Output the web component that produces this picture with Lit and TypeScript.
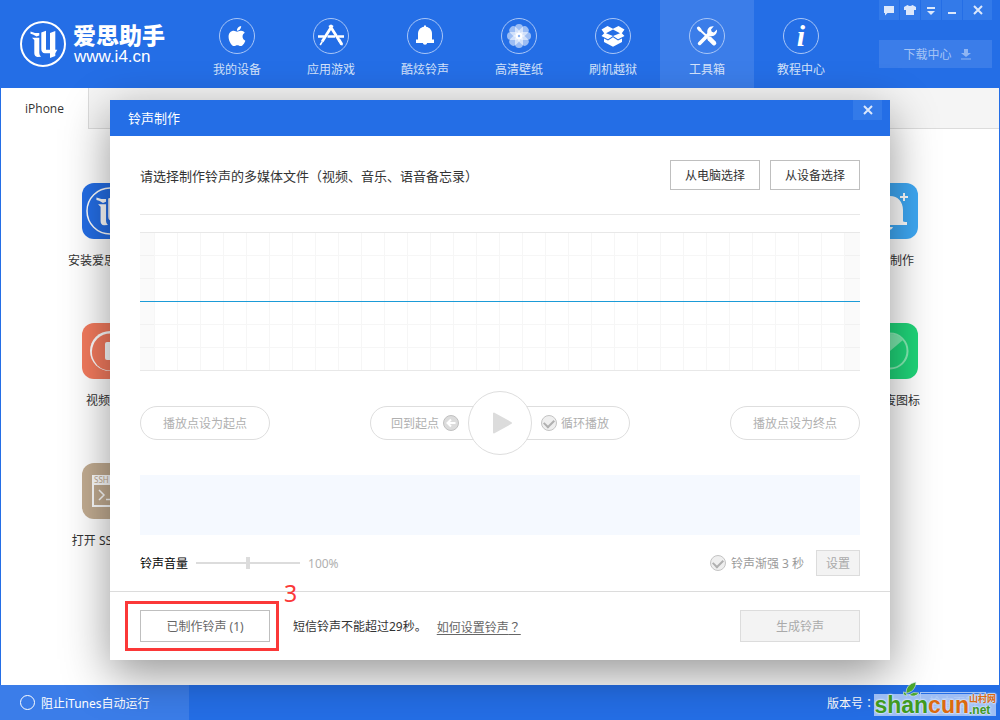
import { LitElement, html, css, svg } from "lit";
import { customElement } from "lit/decorators.js";
import { classMap } from "lit/directives/class-map.js";

const brandMark = svg`
  <path d="M10.500 10.500L15 12H19.300V14.500L16.500 15.500 13 13.500 10.500 12.800zM12 16.800H19.300V32Q19.300 34 21 35.800L17.500 36Q14.300 35.500 14.300 32V19z" fill="currentColor"/>
  <path d="M21.300 11.500L26 9.800V28.700H30V12L35.300 10V28.700H37.300L35.300 32.300V35L30 37V32.300H25Q21.300 32 21.300 28z" fill="currentColor"/>`;

const icons = {
  device: svg`<g transform="translate(9.4 6.6) scale(.0445)"><path fill="#fff" d="M318.7 268.7c-.2-36.7 16.4-64.4 50-84.8-18.8-26.9-47.2-41.7-84.7-44.6-35.5-2.8-74.3 20.7-88.5 20.7-15 0-49.4-19.7-76.4-19.7C63.3 141.2 4 184.8 4 273.5q0 39.3 14.4 81.2c12.8 36.7 59 126.7 107.2 125.2 25.2-.6 43-17.9 75.8-17.9 31.8 0 48.3 17.9 76.4 17.9 48.6-.7 90.4-82.5 102.6-119.3-65.2-30.7-61.7-90-61.7-91.9zm-56.6-164.2c27.3-32.4 24.8-61.9 24-72.5-24.1 1.4-52 16.4-67.9 34.9-17.5 19.8-27.8 44.3-25.6 71.9 26.1 2 49.9-11.4 69.5-34.3z"/></g>`,
  apps: svg`<g fill="none" stroke="#fff"><path stroke-width="2.6" d="M5 18.5H11.5M14.5 18.5H22M25 18.5H31"/><path stroke-width="2.8" d="M19.4 7.2L9.2 23.6M16.6 7.2L26.6 23"/><path stroke-width="1.6" d="M9.4 23.4L7.2 27M26 22L28.8 26.6"/></g><path fill="#fff" d="M24.8 22.8l2.6-1.6 2.6 4.4-.6 2-2-.5z"/>`,
  bell: svg`<path fill="#fff" d="M17 7.500h2v1.300c4 .7 6 3.400 6 7.200v5.500h2v3.500H20c0 1.200-.7 1.700-2 1.700s-2-.5-2-1.700H9V21.500h2V16c0-3.800 2-6.500 6-7.200z"/>`,
  wallpaper: svg`<g fill="#fff" fill-opacity=".55">${[0, 45, 90, 135, 180, 225, 270, 315].map(
    (a) => svg`<rect x="14" y="6" width="8" height="12" rx="4" transform="rotate(${a} 18 18)"/>`
  )}</g><circle cx="18" cy="18" r="3.200" fill="#fff"/><circle cx="18" cy="18" r="1.200" fill="#8db4f3"/>`,
  jailbreak: svg`<path fill="#fff" fill-rule="evenodd" d="M12.500 8L18 10.800 23.500 8 29.500 11.500 26.800 15.200 29.500 18 23 21.300 18 18 13 21.300 6.500 18 9.200 15.200 6.500 11.500zM18 11.500L11 15.200 18 18 25 15.200z"/><path fill="#fff" d="M9 20.500L13 22.600 18 19.300 23 22.600 27 20.500V24L18 28.700 9 24z"/>`,
  tools: svg`<g fill="none" stroke="#fff" stroke-linecap="round"><path stroke-width="2" d="M10.500 11.500L17 17.500"/><path stroke-width="3.200" d="M9.500 10.200l1.500 1.600"/><path stroke-width="4.600" d="M20.500 20.700L25 25.200"/><path stroke-width="3.600" d="M10.600 25.400L21 15"/></g><path fill="#fff" d="M18.500 15.500c-1-4 1.500-7.700 6.300-7.200l-2.800 3.200.7 2.200 2.200.7 3-2.800c.7 4.600-3 7.400-7 6.400z"/>`,
  info: svg`<text x="18" y="27.500" text-anchor="middle" class="info">i</text>`,
};

const navItems: { label: string; icon: unknown; active?: boolean }[] = [
  { label: "我的设备", icon: icons.device },
  { label: "应用游戏", icon: icons.apps },
  { label: "酷炫铃声", icon: icons.bell },
  { label: "高清壁纸", icon: icons.wallpaper },
  { label: "刷机越狱", icon: icons.jailbreak },
  { label: "工具箱", icon: icons.tools, active: true },
  { label: "教程中心", icon: icons.info },
];

const reset = css`
  * { box-sizing: border-box; }
  button, input { font: inherit; margin: 0; }
  button { cursor: pointer; padding: 0; border: 0; background: none; color: inherit; white-space: nowrap; }
  a { color: inherit; }
  svg { display: block; flex: none; }
  .t { padding-top: 2px; }
  .wide { font-family: "Noto Sans CJK TC", sans-serif; }
`;

@customElement("app-header")
class AppHeader extends LitElement {
  static styles = [
    reset,
    css`
      :host { display: flex; height: 88px; background: #246ee6; color: #fff; }
      .brand { display: flex; align-items: center; gap: 7px; width: 190px; padding-left: 20px; flex: none; }
      .names { display: flex; flex-direction: column; padding-top: 2px; }
      .name { font-size: 23px; line-height: 24px; font-weight: 900; white-space: nowrap; }
      .site { font: 17px/20px "Liberation Sans", sans-serif; padding-left: 1px; }
      nav { display: flex; }
      .item { width: 94px; display: flex; flex-direction: column; align-items: center; gap: 7px; padding-top: 18px; text-decoration: none; line-height: 18px; color: #d3e2fa; }
      .item.active { background: #3b7de9; }
      .info { font: italic bold 30px "Liberation Serif", serif; fill: #fff; }
      .side { margin-left: auto; padding-right: 8px; display: flex; flex-direction: column; gap: 20px; }
      .win { display: flex; gap: 1px; }
      .win button { width: 20px; height: 20px; background: #337ae9; display: grid; place-items: center; }
      .win .close { width: 29px; }
      .download { height: 28px; background: #3b7de9; color: #a5c4f5; display: flex; align-items: center; justify-content: center; gap: 8px; padding-left: 4px; }
    `,
  ];
  render() {
    return html`
      <div class="brand">
        <svg width="46" height="46" viewBox="0 0 46 46" color="#fff"><circle cx="23" cy="23" r="22" fill="none" stroke="#fff" stroke-width="2"/>${brandMark}</svg>
        <div class="names"><span class="name">爱思助手</span><span class="site">www.i4.cn</span></div>
      </div>
      <nav>
        ${navItems.map(
          (n) => html`<a href="#" class=${classMap({ item: true, active: !!n.active })}>
            <svg width="36" height="36" viewBox="0 0 36 36"><circle cx="18" cy="18" r="17.500" fill="none" stroke="#a9c6f6"/>${n.icon}</svg>
            <span>${n.label}</span>
          </a>`
        )}
      </nav>
      <div class="side">
        <div class="win">
          <button aria-label="反馈"><svg width="12" height="12" viewBox="0 0 12 12"><path fill="#dce8fb" d="M1 2h10v7H4.500L2 11.500V9H1z"/></svg></button>
          <button aria-label="皮肤"><svg width="12" height="12" viewBox="0 0 12 12"><path fill="#dce8fb" d="M3.500 1Q6 3 8.500 1L12 3v3h-2v5H2V6H0V3z"/></svg></button>
          <button aria-label="菜单"><svg width="12" height="12" viewBox="0 0 12 12"><path fill="#dce8fb" d="M2 3h8v2H2zM2 7h8l-4 4z"/></svg></button>
          <button aria-label="最小化"><svg width="12" height="12" viewBox="0 0 12 12"><path fill="#dce8fb" d="M2 8h8v2H2z"/></svg></button>
          <button class="close" aria-label="关闭"><svg width="12" height="12" viewBox="0 0 12 12"><path fill="none" stroke="#dce8fb" stroke-width="2" d="M2 2l8 8M10 2l-8 8"/></svg></button>
        </div>
        <button class="download"><span class="t">下载中心</span>
          <svg width="12" height="12" viewBox="0 0 12 12"><path fill="#8fb5f3" d="M4 1h4v4h3L6 9 1 5h3zM1 10.500h10v1H1z"/></svg>
        </button>
      </div>
    `;
  }
}

@customElement("tool-grid")
class ToolGrid extends LitElement {
  static styles = [
    reset,
    css`
      :host { display: grid; grid-template-columns: repeat(6, 1fr); grid-auto-rows: 140px; padding: 54px 31px 0; }
      .tool { display: flex; flex-direction: column; align-items: center; gap: 12px; text-decoration: none; color: #333; line-height: 20px; white-space: nowrap; }
      .last { grid-column: 6; }
      .first { grid-column: 1; }
      .ssh { font: 8px "Noto Sans", sans-serif; fill: #c3ad92; }
    `,
  ];
  private tool(label: string, color: string, art: unknown, place: string) {
    return html`<a href="#" class="tool ${place}">
      <svg width="56" height="56" viewBox="0 0 56 56"><rect width="56" height="56" rx="12" fill=${color}/>${art}</svg>
      <span>${label}</span>
    </a>`;
  }
  render() {
    return html`
      ${this.tool("安装爱思移动端", "#246ee6", svg`<circle cx="28" cy="28" r="23" fill="none" stroke="#fff" stroke-width="1.500"/><g color="#fff" transform="translate(3 3) scale(1.090)">${brandMark}</g>`, "first")}
      ${this.tool("铃声制作", "#3fa9f5", svg`<path fill="#fff" d="M28 13c8 0 13 6 13 14v11q0 1 4 1v3H11v-3q4 0 4-1V27c0-8 5-14 13-14zM22 44h9q-1 3-4.500 3t-4.500-3zM41 13v-3h2v3h3v2h-3v3h-2v-3h-3v-2z"/>`, "last")}
      ${this.tool("视频转换", "#f47b5e", svg`<circle cx="28" cy="28" r="20" fill="#fff"/><circle cx="28.500" cy="29" r="18.600" fill="#f47b5e"/><rect x="23" y="19" width="10" height="18" rx="2" fill="#fff"/>`, "first")}
      ${this.tool("删除废图标", "#20d67a", svg`<circle cx="28" cy="28" r="17.500" fill="none" stroke="#86edb4" stroke-width="2"/><path fill="#7ceaae" d="M28 28V11a17 17 0 0 1 13 6z"/>`, "last")}
      ${this.tool("打开 SSH 通道", "#c3ad92", svg`<path fill="#fff" fill-rule="evenodd" d="M10 12h36v32H10zM12 22v20h32V22z"/><text class="ssh" x="12" y="20">SSH</text><path fill="none" stroke="#fff" stroke-width="1.500" d="M17 27l5 5-5 5M24 36.500h8"/>`, "first")}
    `;
  }
}

@customElement("ringtone-dialog")
class RingtoneDialog extends LitElement {
  static styles = [
    reset,
    css`
      :host { display: block; background: #fff; color: #333; box-shadow: 0 14px 44px rgba(0, 0, 0, 0.42); }
      .title { height: 36px; background: #246ee6; color: #fff; display: flex; justify-content: space-between; padding: 0 8px 0 18px; font-size: 13px; line-height: 36px; }
      h2 { margin: 0; font: inherit; }
      .close { width: 29px; height: 20px; background: #337ae9; display: grid; place-items: center; }
      .body { padding: 24px 30px 15px; }
      .row { display: flex; align-items: center; }
      .pick { gap: 10px; padding-bottom: 24px; border-bottom: 1px solid #e8e8e8; margin-bottom: 17px; font-size: 13px; }
      .pick p { margin: 0 auto 0 0; }
      .btn { border: 1px solid #bfbfbf; background: #fff; font-size: 12px; display: inline-flex; align-items: center; justify-content: center; padding-top: 2px; }
      .pick .btn { width: 90px; height: 30px; }
      .wave { height: 139px; display: flex; border: solid #e8e8e8; border-width: 1px 0; margin-bottom: 20px; background: repeating-linear-gradient(#f6f6f6 0 1px, transparent 1px 23px) border-box; position: relative; }
      .wave::after { content: ""; position: absolute; left: 0; right: 0; top: 68px; height: 1px; background: #1b9bd7; }
      .edge { width: 14px; background: rgba(0, 0, 0, 0.02); }
      .edge.end { width: 15px; }
      .cells { flex: 1; background: repeating-linear-gradient(90deg, #f6f6f6 0 1px, transparent 1px 23px); }
      .controls { height: 64px; justify-content: space-between; color: #b0b0b0; margin-bottom: 20px; }
      .pill { height: 34px; border: 1px solid #dedede; border-radius: 17px; background: #fff; }
      .mark { width: 130px; padding-top: 2px; }
      .player { width: 260px; display: grid; grid-template: 32px / 1fr 64px 1fr; align-items: center; }
      .half { display: flex; align-items: center; gap: 4px; }
      .back { justify-content: flex-end; padding-right: 9px; }
      .loop { padding-left: 9px; }
      .play { width: 64px; height: 64px; border: 1px solid #dedede; border-radius: 50%; background: #fff; display: grid; place-items: center; }
      .strip { height: 60px; background: #f5f9ff; margin-bottom: 15px; }
      .volume { height: 26px; }
      .vol { color: #000; margin-right: 8px; }
      input[type="range"] { appearance: none; width: 104px; height: 12px; background: linear-gradient(#dcdcdc, #dcdcdc) center / 100% 2px no-repeat; margin-right: 8px; }
      input[type="range"]::-webkit-slider-thumb { appearance: none; width: 4px; height: 12px; background: #dcdcdc; }
      .muted { color: #b0b0b0; }
      .fade { margin-left: auto; display: flex; align-items: center; gap: 5px; color: #999; margin-right: 12px; }
      .tick { appearance: none; width: 16px; height: 16px; border: 1px solid #c4c4c4; border-radius: 50%; background: #efefef; display: grid; place-items: center; }
      .tick:checked::before { content: ""; width: 8px; height: 5px; border: solid #b0b0b0; border-width: 0 0 2px 2px; transform: translateY(-1px) rotate(-45deg); }
      .off { background: #f3f3f3; border-color: #dcdcdc; color: #aaa; }
      .set { width: 44px; height: 26px; }
      .foot { border-top: 1px solid #dcdcdc; padding: 18px 30px; }
      .marked { position: relative; margin-right: 23px; }
      .made { width: 130px; height: 32px; color: #666; }
      .frame { position: absolute; inset: -9px -9px -9px -15px; border: 3px solid #fb3838; pointer-events: none; }
      .step { position: absolute; left: 144px; top: -31px; color: #fb3838; font-size: 23px; line-height: 28px; }
      .foot a { margin-left: 10px; color: #666; text-underline-offset: 2px; }
      .make { width: 120px; height: 32px; margin-left: auto; }
    `,
  ];
  render() {
    return html`
      <div class="title"><h2>铃声制作</h2>
        <button class="close" aria-label="关闭"><svg width="12" height="12" viewBox="0 0 12 12"><path fill="none" stroke="#dce8fb" stroke-width="2" d="M2 2l8 8M10 2l-8 8"/></svg></button>
      </div>
      <div class="body">
        <div class="row pick">
          <p class="t">请选择制作铃声的多媒体文件（视频、音乐、语音备忘录）</p>
          <button class="btn">从电脑选择</button>
          <button class="btn">从设备选择</button>
        </div>
        <div class="wave"><div class="edge"></div><div class="cells"></div><div class="edge end"></div></div>
        <div class="row controls">
          <button class="pill mark">播放点设为起点</button>
          <div class="pill player">
            <button class="half back"><span class="t">回到起点</span>
              <svg width="16" height="16" viewBox="0 0 16 16"><circle cx="8" cy="8" r="7.500" fill="#dcdcdc" stroke="#c0c0c0"/><path fill="none" stroke="#fff" stroke-width="2" d="M12.500 8H5M8 4.500L4.500 8 8 11.500"/></svg>
            </button>
            <button class="play" aria-label="播放"><svg width="24" height="24" viewBox="0 0 24 24"><path fill="#dcdcdc" stroke="#dcdcdc" stroke-width="2" stroke-linejoin="round" d="M6 2.500v19L23 12z"/></svg></button>
            <label class="half loop"><input class="tick" type="checkbox" checked disabled /><span class="t">循环播放</span></label>
          </div>
          <button class="pill mark">播放点设为终点</button>
        </div>
        <div class="strip"></div>
        <div class="row volume">
          <label class="t vol" for="vol">铃声音量</label>
          <input id="vol" type="range" min="0" max="200" value="100" disabled />
          <span class="t muted">100%</span>
          <label class="fade"><input class="tick" type="checkbox" checked disabled /><span class="t">铃声渐强 3 秒</span></label>
          <button class="btn off set" disabled>设置</button>
        </div>
      </div>
      <div class="row foot">
        <div class="marked"><button class="btn made">已制作铃声 (1)</button><span class="frame"></span><span class="step">3</span></div>
        <span class="t">短信铃声不能超过29秒。</span>
        <a class="t" href="#">如何设置铃声<span class="wide">？</span></a>
        <button class="btn off make" disabled>生成铃声</button>
      </div>
    `;
  }
}

@customElement("app-root")
class AppRoot extends LitElement {
  static styles = [
    reset,
    css`
      :host { display: flex; flex-direction: column; position: relative; min-height: 100vh; overflow: hidden; font: 12px/18px "Noto Sans", "Noto Sans CJK SC", sans-serif; color: #333; background: #fff; }
      main { flex: 1; border: solid #246ee6; border-width: 0 1px; }
      .tabs { display: flex; height: 41px; background: #f5f5f5; border-bottom: 1px solid #dcdcdc; }
      .tab { width: 88px; height: 41px; background: #fff; border-right: 1px solid #dcdcdc; font: 12px "Open Sans", sans-serif; color: #333; }
      .overlay { position: absolute; inset: 100px 110px auto; }
      footer { height: 35px; background: #246ee6; color: #fff; display: flex; justify-content: space-between; align-items: center; }
      .block { width: 189px; height: 35px; padding-left: 20px; background: #3b7de9; display: flex; align-items: center; gap: 6px; }
      .ring { appearance: none; width: 15px; height: 15px; border: 1px solid #fff; border-radius: 50%; }
      .version { display: flex; align-items: center; gap: 45px; padding-right: 14px; }
      .update { width: 66px; height: 22px; border: 1px solid #a5c4f5; color: #a5c4f5; }
      .stamp { position: absolute; right: 4px; bottom: 4px; display: flex; align-items: flex-end; color: #3f9a1f; text-shadow: 1px 0 1px #c9dcf8, -1px 0 1px #c9dcf8, 0 1px 1px #c9dcf8, 0 -1px 1px #c9dcf8, 0 0 3px #c9dcf8; }
      .word { font: bold 23px/22px "Liberation Sans", sans-serif; background: rgba(180, 205, 246, 0.85); }
      .orange { color: #dc6a10; }
      .small { display: flex; flex-direction: column; font: bold 12px/11px "Liberation Sans", "Noto Sans CJK SC", sans-serif; background: rgba(180, 205, 246, 0.85); }
      .cn { font-size: 9px; }
      .leaf { position: absolute; left: 29px; bottom: 17px; }
    `,
  ];
  render() {
    return html`
      <app-header></app-header>
      <main>
        <div class="tabs"><button class="tab">iPhone</button></div>
        <tool-grid></tool-grid>
      </main>
      <footer>
        <label class="block"><input class="ring" type="checkbox" /><span class="t">阻止iTunes自动运行</span></label>
        <div class="version"><span class="t">版本号<span class="wide">：</span></span><button class="update">检查更新</button></div>
      </footer>
      <div class="overlay"><ringtone-dialog></ringtone-dialog></div>
      <div class="stamp">
        <span class="word">shan<span class="orange">cun</span></span>
        <span class="small"><span class="cn orange">山村网</span><span>.net</span></span>
        <svg class="leaf" width="18" height="18" viewBox="0 0 18 18"><path fill="#4aa52c" stroke="#dbe8fb" stroke-width=".6" d="M3 12Q3 3 13 1 13 9 5 12zM6 14q4-4 10-2-4 5-10 2zM0 11q3-1 4 4-4 0-4-4z"/></svg>
      </div>
    `;
  }
}
